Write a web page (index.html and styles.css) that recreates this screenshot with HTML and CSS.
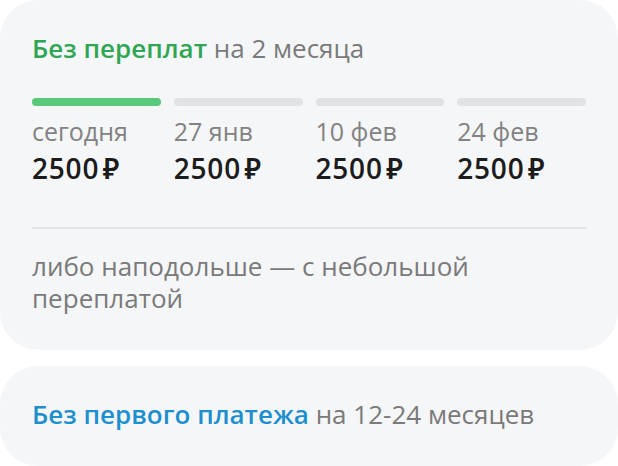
FILE: index.html
```html
<!DOCTYPE html>
<html lang="ru">
<head>
    <meta charset="UTF-8">
    <meta name="viewport" content="width=device-width, initial-scale=1.0">
    <title>Оплата частями</title>
    <link rel="stylesheet" href="styles.css">
</head>
<body>
    <div class="card plan">
        <div class="title"><span class="accent green">Без переплат</span> на 2 месяца</div>
        <div class="schedule">
            <div class="step">
                <div class="bar done"></div>
                <div class="date">сегодня</div>
                <div class="sum">2500&#8202;&#8381;</div>
            </div>
            <div class="step">
                <div class="bar"></div>
                <div class="date">27 янв</div>
                <div class="sum">2500&#8202;&#8381;</div>
            </div>
            <div class="step">
                <div class="bar"></div>
                <div class="date">10 фев</div>
                <div class="sum">2500&#8202;&#8381;</div>
            </div>
            <div class="step">
                <div class="bar"></div>
                <div class="date">24 фев</div>
                <div class="sum">2500&#8202;&#8381;</div>
            </div>
        </div>
        <div class="note">либо наподольше — с небольшой переплатой</div>
    </div>

    <div class="card other">
        <div class="title"><span class="accent blue">Без первого платежа</span> на 12-24 месяцев</div>
    </div>
</body>
</html>
```

FILE: styles.css
```css
body {
    margin: 0;
    background: #fff;
    font-family: "Open Sans", "Noto Sans", sans-serif;
    color: #7a7a7a;
}
.card {
    background: #f5f6f8;
    border-radius: 38px;
    padding: 0 32px;
}
.plan {
    padding-top: 30px;
    padding-bottom: 36px;
}
.other {
    margin-top: 16px;
    padding-top: 30px;
    padding-bottom: 34px;
}
.title {
    font-size: 26px;
    line-height: 36px;
    color: #7a7a7a;
}
.accent {
    font-weight: 600;
}
.green { color: #2fa653; }
.blue { color: #1e8fce; }
.schedule {
    display: grid;
    grid-template-columns: repeat(4, 1fr);
    gap: 13px;
    margin-top: 32px;
    padding-bottom: 42px;
    border-bottom: 2px solid #e2e3e6;
}
.bar {
    height: 8px;
    border-radius: 4px;
    background: #e1e2e6;
    margin-bottom: 9px;
}
.bar.done {
    background: #57c978;
}
.date {
    font-size: 25px;
    line-height: 32px;
    color: #828282;
}
.sum {
    margin-top: 4px;
    font-size: 28px;
    font-weight: 600;
    line-height: 34px;
    letter-spacing: 0.8px;
    color: #1c1c1c;
}
.note {
    margin-top: 21px;
    font-size: 26px;
    line-height: 32px;
    color: #7a7a7a;
}
```
